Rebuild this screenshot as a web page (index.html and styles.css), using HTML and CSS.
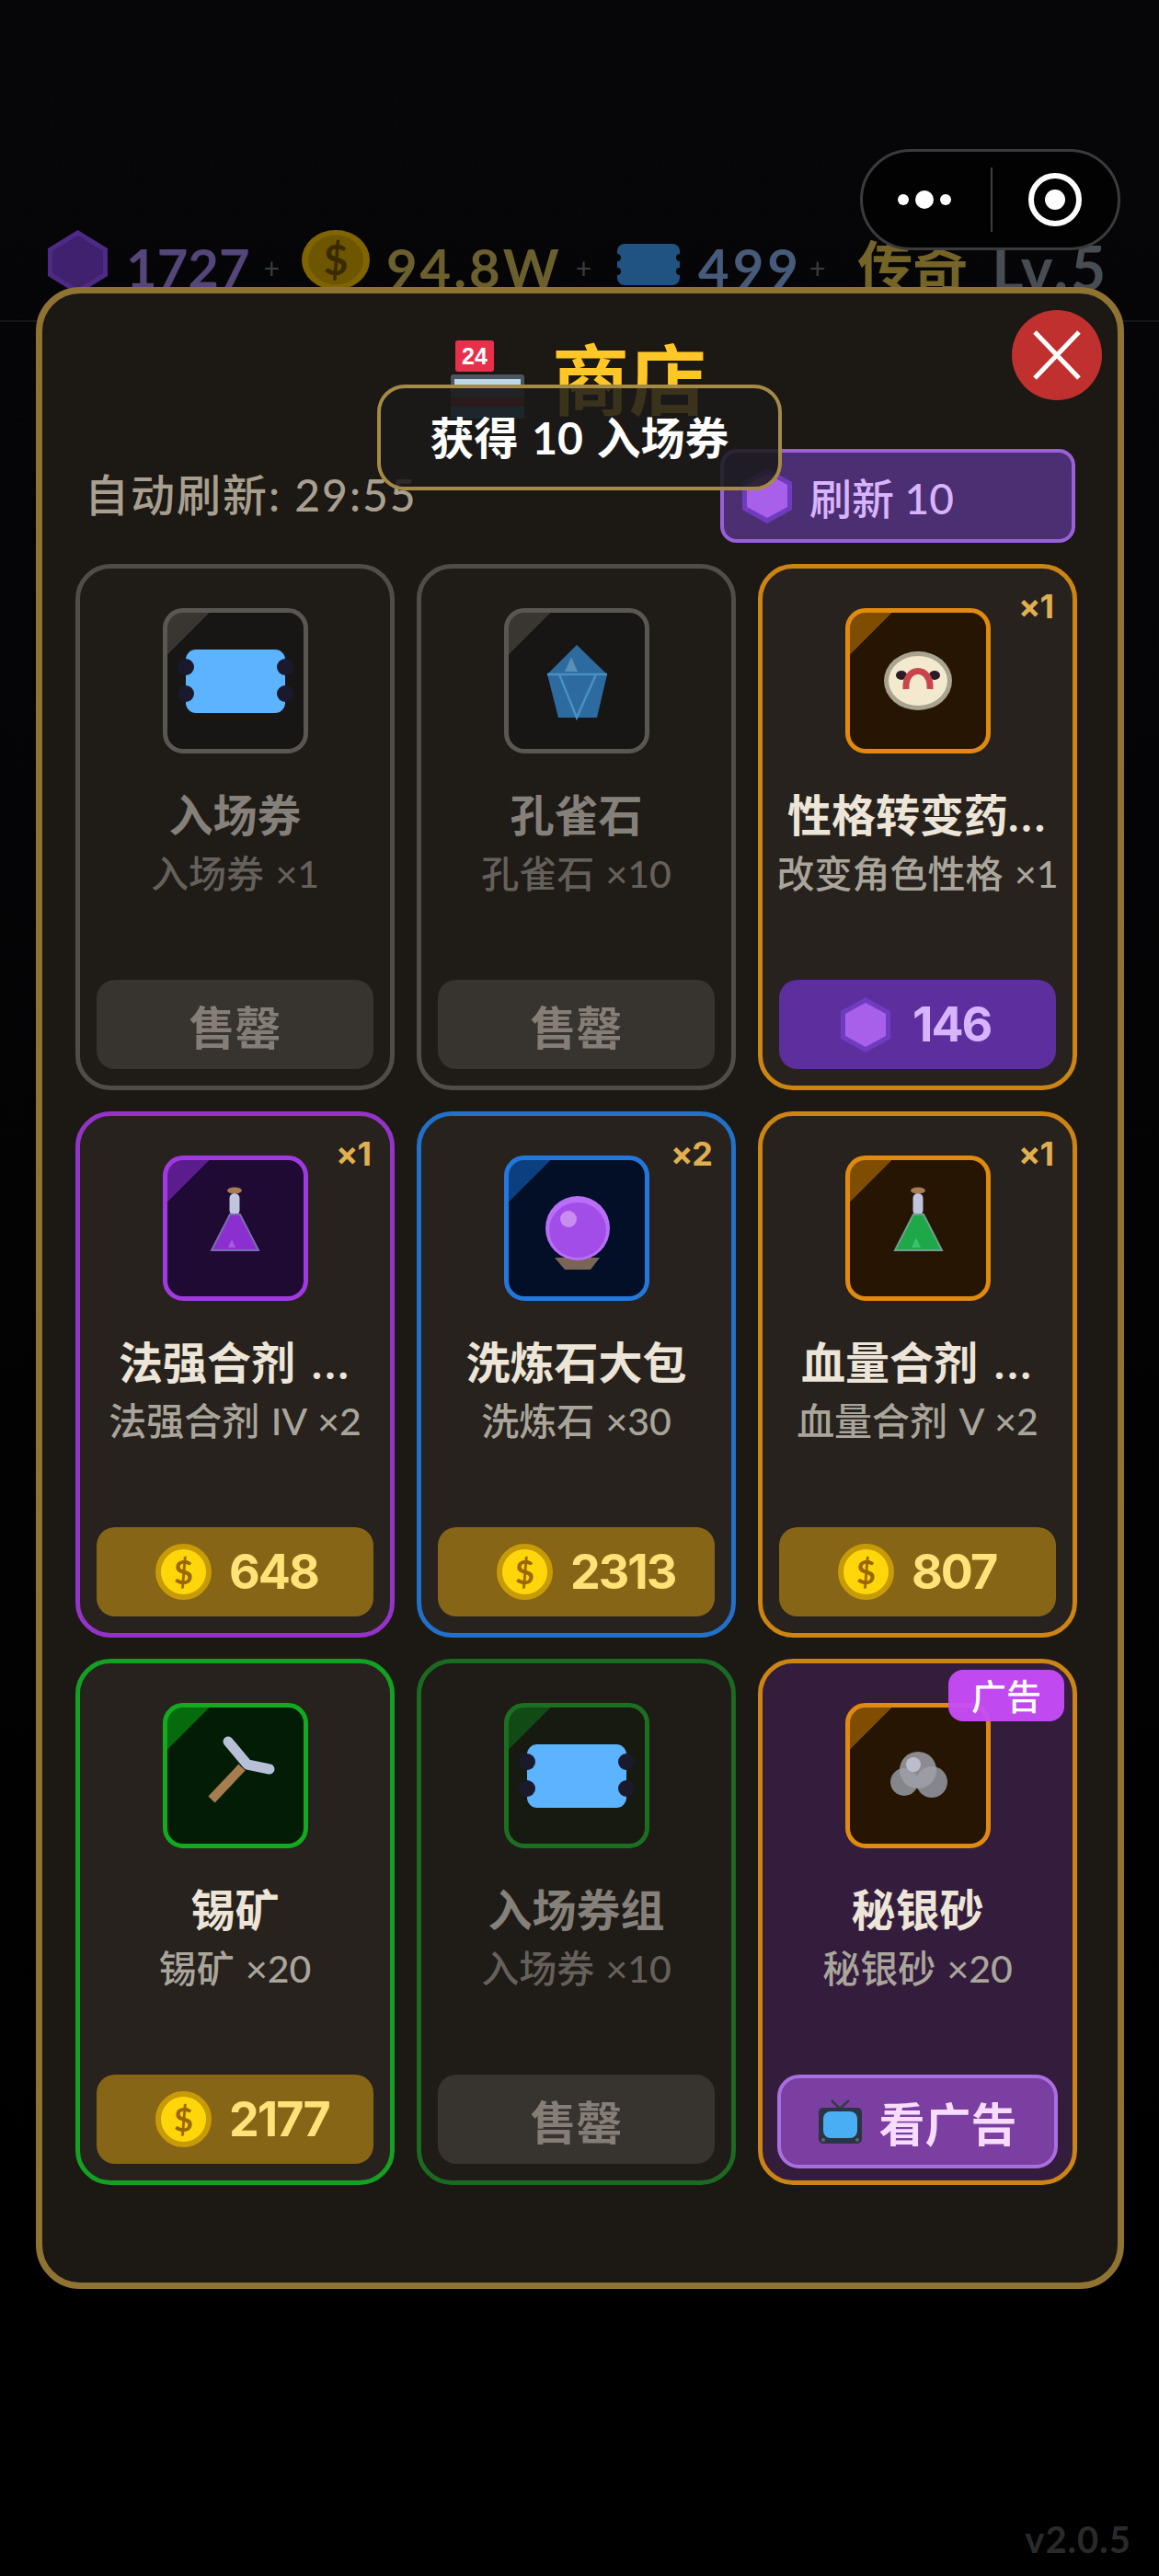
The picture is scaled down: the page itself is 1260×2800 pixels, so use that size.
FILE: index.html
```html
<!DOCTYPE html>
<html lang="zh-CN">
<head>
    <meta charset="UTF-8">
    <title>商店</title>
    <link rel="stylesheet" href="styles.css">
</head>
<body>
    <svg class="sprites" width="0" height="0">
        <symbol id="hex" viewBox="0 0 54 60">
            <polygon points="27,0 54,15 54,45 27,60 0,45 0,15" fill="#6f3cc0"/>
            <polygon points="27,6 49,18 49,42 27,54 5,42 5,18" fill="#a860ea"/>
        </symbol>
        <symbol id="ticket" viewBox="0 0 146 146">
            <rect x="19" y="39" width="108" height="69" rx="11" fill="#5cb3ff"/>
            <circle cx="19" cy="58" r="9" fill="#1b1a2d"/>
            <circle cx="19" cy="87" r="9" fill="#1b1a2d"/>
            <circle cx="127" cy="58" r="9" fill="#1b1a2d"/>
            <circle cx="127" cy="87" r="9" fill="#1b1a2d"/>
        </symbol>
    </svg>

    <div class="capsule">
        <span class="capsule-dots"><i></i><i></i><i></i></span>
        <span class="capsule-line"></span>
        <span class="capsule-target"></span>
    </div>

    <!-- 顶部资源栏 -->
    <div class="res-bar">
        <svg class="res-hex" viewBox="0 0 65 70"><polygon points="32.5,0 65,20 65,50 32.5,70 0,50 0,20" fill="#4d2a85"/><polygon points="32.5,6 60,23 60,47 32.5,64 5,47 5,23" fill="#3f2170"/></svg>
        <span class="res-num res-gem">1727</span>
        <span class="res-plus">+</span>
        <svg class="res-coin" viewBox="0 0 74 65"><ellipse cx="37" cy="32.5" rx="37" ry="32.5" fill="#806400"/><ellipse cx="37" cy="32.5" rx="30" ry="27" fill="#6e5500"/><text x="37" y="49" text-anchor="middle" font-size="46" font-weight="700" font-family="Lato, sans-serif" fill="#3a2a00">$</text></svg>
        <span class="res-num res-gold">94.8W</span>
        <span class="res-plus">+</span>
        <svg class="res-ticket" viewBox="0 0 68 45">
            <rect x="0" y="0" width="68" height="45" rx="8" fill="#205380"/>
            <circle cx="0" cy="15" r="4" fill="#050507"/>
            <circle cx="0" cy="30" r="4" fill="#050507"/>
            <circle cx="68" cy="15" r="4" fill="#050507"/>
            <circle cx="68" cy="30" r="4" fill="#050507"/>
        </svg>
        <span class="res-num res-blue">499</span>
        <span class="res-plus res-plus-near">+</span>
        <span class="res-rank">传奇</span>
        <span class="res-num res-level">Lv.5</span>
    </div>

    <!-- 商店面板 -->
    <div class="shop">
        <button class="close-btn">
            <svg viewBox="0 0 52 54" width="52" height="54"><path d="M2 2 L50 52 M50 2 L2 52" stroke="#fff" stroke-width="5" fill="none"/></svg>
        </button>
        <div class="shop-head">
            <svg class="shop-emoji" viewBox="0 0 82 85">
                <rect x="6" y="0" width="42" height="34" rx="3" fill="#e8304a"/>
                <text x="27" y="26" text-anchor="middle" font-size="25" font-weight="700" font-family="Liberation Sans, sans-serif" fill="#fff">24</text>
                <rect x="1" y="37" width="80" height="48" rx="3" fill="#4a5560"/>
                <rect x="5" y="42" width="72" height="9" fill="#bcd8e8"/>
                <rect x="1" y="62" width="80" height="10" fill="#8c2030"/>
                <rect x="1" y="72" width="80" height="13" fill="#2f6f96"/>
            </svg>
            <h1 class="shop-title">商店</h1>
        </div>

        <div class="shop-tools">
            <span class="timer">自动刷新: 29:55</span>
            <button class="refresh-btn">
                <svg class="refresh-hex"><use href="#hex"/></svg>
                <span>刷新 10</span>
            </button>
        </div>

        <div class="goods">
            <div class="card gray sold">
                <div class="item-icon"><svg viewBox="0 0 146 146"><use href="#ticket"/></svg></div>
                <div class="name">入场券</div>
                <div class="sub">入场券 ×1</div>
                <div class="buy buy-sold">售罄</div>
            </div>

            <div class="card gray sold">
                <div class="item-icon">
                    <svg viewBox="0 0 146 146">
                        <polygon points="73,34 106,66 95,113 53,113 41,66" fill="#2d6a9f"/>
                        <polygon points="67,47 74,63 60,63" fill="#5a8fb8"/>
                        <path d="M41 66 H106 M54 66 L73 113 L94 66" stroke="#4a90c0" stroke-width="2.5" fill="none"/>
                    </svg>
                </div>
                <div class="name">孔雀石</div>
                <div class="sub">孔雀石 ×10</div>
                <div class="buy buy-sold">售罄</div>
            </div>

            <div class="card orange">
                <span class="qty">×1</span>
                <div class="item-icon">
                    <svg viewBox="0 0 146 146">
                        <ellipse cx="73" cy="73" rx="37" ry="32" fill="#a9a48f"/>
                        <ellipse cx="73" cy="73" rx="32" ry="27" fill="#f2e9cf"/>
                        <ellipse cx="55" cy="67" rx="6" ry="5" fill="#2a1c24"/>
                        <ellipse cx="91" cy="67" rx="6" ry="5" fill="#2a1c24"/>
                        <path d="M60 82 C58 56 88 56 86 82" stroke="#c8454a" stroke-width="7" fill="none"/>
                    </svg>
                </div>
                <div class="name">性格转变药<span class="dots">...</span></div>
                <div class="sub">改变角色性格 ×1</div>
                <div class="buy buy-gem"><svg class="price-hex"><use href="#hex"/></svg><span>146</span></div>
            </div>

            <div class="card purple">
                <span class="qty">×1</span>
                <div class="item-icon">
                    <svg viewBox="0 0 146 146">
                        <ellipse cx="72" cy="32" rx="8" ry="3.5" fill="#a77c50"/>
                        <rect x="66.5" y="35" width="11" height="24" rx="5.5" fill="#c0c4dc"/>
                        <polygon points="67,58 78,58 98,97 47,97" fill="#8b2fd0" stroke="#7b6db0" stroke-width="2"/>
                        <polygon points="69,85 73,94 65,94" fill="#a85cdc"/>
                    </svg>
                </div>
                <div class="name">法强合剂 <span class="dots">...</span></div>
                <div class="sub">法强合剂 IV ×2</div>
                <div class="buy buy-gold"><span class="coin">$</span><span>648</span></div>
            </div>

            <div class="card blue">
                <span class="qty">×2</span>
                <div class="item-icon">
                    <svg viewBox="0 0 146 146">
                        <polygon points="49,105 98,105 88,118 60,118" fill="#7a6456"/>
                        <circle cx="74" cy="73" r="35" fill="#b96ef8"/>
                        <ellipse cx="74" cy="75" rx="31" ry="30" fill="#a34de8"/>
                        <circle cx="64" cy="63" r="9" fill="#c98df0"/>
                    </svg>
                </div>
                <div class="name">洗炼石大包</div>
                <div class="sub">洗炼石 ×30</div>
                <div class="buy buy-gold"><span class="coin">$</span><span>2313</span></div>
            </div>

            <div class="card orange">
                <span class="qty">×1</span>
                <div class="item-icon">
                    <svg viewBox="0 0 146 146">
                        <ellipse cx="73" cy="32" rx="8" ry="3.5" fill="#a77c50"/>
                        <rect x="67.5" y="35" width="11" height="24" rx="5.5" fill="#c0c4dc"/>
                        <polygon points="68,58 79,58 99,97 48,97" fill="#1fa84a" stroke="#6f9f8f" stroke-width="2"/>
                        <polygon points="71,83 76,94 66,94" fill="#3cc06a"/>
                    </svg>
                </div>
                <div class="name">血量合剂 <span class="dots">...</span></div>
                <div class="sub">血量合剂 V ×2</div>
                <div class="buy buy-gold"><span class="coin">$</span><span>807</span></div>
            </div>

            <div class="card green">
                <div class="item-icon">
                    <svg viewBox="0 0 146 146">
                        <path d="M47 99 L80 64" stroke="#a57d4f" stroke-width="10" fill="none"/>
                        <path d="M65 36 L86 61 L110 66" stroke="#b8c0d8" stroke-width="11" stroke-linecap="round" stroke-linejoin="round" fill="none"/>
                    </svg>
                </div>
                <div class="name">锡矿</div>
                <div class="sub">锡矿 ×20</div>
                <div class="buy buy-gold"><span class="coin">$</span><span>2177</span></div>
            </div>

            <div class="card green-dim sold">
                <div class="item-icon"><svg viewBox="0 0 146 146"><use href="#ticket"/></svg></div>
                <div class="name">入场券组</div>
                <div class="sub">入场券 ×10</div>
                <div class="buy buy-sold">售罄</div>
            </div>

            <div class="card orange ad">
                <span class="ad-tag">广告</span>
                <div class="item-icon">
                    <svg viewBox="0 0 146 146">
                        <circle cx="58" cy="80" r="15" fill="#85858c"/>
                        <circle cx="88" cy="80" r="17" fill="#85858c"/>
                        <circle cx="73" cy="67" r="20" fill="#a0a0a8" fill-opacity="0.85"/>
                        <circle cx="68" cy="61" r="8" fill="#bcbccc"/>
                    </svg>
                </div>
                <div class="name">秘银砂</div>
                <div class="sub">秘银砂 ×20</div>
                <div class="buy buy-ad">
                    <svg class="tv" viewBox="0 0 47 48">
                        <path d="M14 1 L23 10 L33 1" stroke="#333a46" stroke-width="2.5" fill="none"/>
                        <rect x="0" y="9" width="47" height="39" rx="5" fill="#2b3442"/>
                        <rect x="5" y="13" width="37" height="29" rx="8" fill="#4aaef5"/>
                        <circle cx="5" cy="44" r="2" fill="#5d6673"/>
                        <circle cx="42" cy="44" r="2" fill="#5d6673"/>
                    </svg>
                    <span>看广告</span>
                </div>
            </div>
        </div>

        <!-- 提示 -->
        <div class="toast">获得 10 入场券</div>
    </div>

    <div class="version">v2.0.5</div>
</body>
</html>
```

FILE: styles.css
```css
* {
    box-sizing: border-box;
    margin: 0;
    padding: 0;
}

body {
    width: 1260px;
    height: 2800px;
    overflow: hidden;
    background: linear-gradient(#060608 0, #050507 600px, #000 2400px);
    color: #ece5d8;
    font-family: Lato, "Noto Sans CJK SC", sans-serif;
    position: relative;
}

.sprites {
    position: absolute;
}

/* 胶囊按钮 */
.capsule {
    position: absolute;
    left: 935px;
    top: 162px;
    width: 283px;
    height: 110px;
    border: 3px solid #3b3b3d;
    border-radius: 55px;
    background: #020203;
    display: flex;
    align-items: center;
    z-index: 1;
}

.capsule-dots {
    width: 139px;
    padding-right: 6px;
    display: flex;
    align-items: center;
    justify-content: center;
    gap: 7px;
}

.capsule-dots i {
    width: 12px;
    height: 12px;
    border-radius: 50%;
    background: #fff;
}

.capsule-dots i:nth-child(2) {
    width: 20px;
    height: 20px;
}

.capsule-line {
    width: 2px;
    height: 70px;
    background: #3e3e40;
}

.capsule-target {
    width: 58px;
    height: 58px;
    margin-left: 39px;
    border-radius: 50%;
    border: 6px solid #fff;
    position: relative;
}

.capsule-target::after {
    content: "";
    position: absolute;
    left: 12px;
    top: 12px;
    width: 22px;
    height: 22px;
    border-radius: 50%;
    background: #fff;
}

/* 资源栏 */
.res-bar {
    height: 350px;
    padding: 250px 0 0 52px;
    margin-bottom: -38px;
    border-bottom: 2px solid #151517;
    display: flex;
    align-items: flex-start;
    white-space: nowrap;
}

.res-hex {
    width: 65px;
    height: 70px;
    flex: none;
}

.res-coin {
    width: 74px;
    height: 65px;
    flex: none;
    margin-left: 24px;
}

.res-ticket {
    width: 68px;
    height: 45px;
    flex: none;
    margin: 15px 0 0 28px;
}

.res-num {
    font-size: 58px;
    line-height: 72px;
    font-weight: 700;
    margin: 5px 0 0 20px;
}

.res-gem { color: #54457a; }
.res-gold { color: #6b5f2e; margin-left: 18px; letter-spacing: 3px; }
.res-blue { color: #465b7a; letter-spacing: 4px; }
.res-level { color: #484d53; margin-left: 26px; font-size: 66px; letter-spacing: 3px; }

.res-plus {
    font-size: 30px;
    line-height: 72px;
    color: #3c3c3c;
    margin: 5px 0 0 15px;
}

.res-plus-near {
    margin-left: 8px;
}

.res-rank {
    font-size: 60px;
    line-height: 72px;
    font-weight: 700;
    color: #756428;
    margin: 3px 0 0 35px;
}

/* 面板 */
.shop {
    position: relative;
    margin-left: 39px;
    width: 1183px;
    height: 2176px;
    padding: 0 44px 0 36px;
    border: 7px solid #8f7333;
    border-radius: 48px;
    background: #1c1814;
}

.close-btn {
    position: absolute;
    right: 17px;
    top: 18px;
    width: 98px;
    height: 98px;
    border: none;
    border-radius: 50%;
    background: #c0302f;
    display: flex;
    align-items: center;
    justify-content: center;
}

.shop-head {
    height: 169px;
    padding: 30px 0 0 4px;
    display: flex;
    align-items: flex-start;
    justify-content: center;
    gap: 29px;
}

.shop-emoji {
    width: 82px;
    height: 85px;
    margin-top: 21px;
}

.shop-title {
    font-size: 84px;
    line-height: 128px;
    font-weight: 700;
    color: #ffc627;
}

.shop-tools {
    height: 102px;
    margin-bottom: 23px;
    display: flex;
    align-items: center;
    justify-content: space-between;
}

.timer {
    margin: -8px 0 0 10px;
    font-size: 48px;
    font-weight: 500;
    letter-spacing: 2px;
    color: #a89f8f;
}

.refresh-btn {
    width: 386px;
    height: 102px;
    margin-right: 2px;
    padding-left: 20px;
    border: 4px solid #9a60d8;
    border-radius: 18px;
    background: #4c2f72;
    color: #d8b4fe;
    font-family: inherit;
    font-size: 46px;
    font-weight: 500;
    display: flex;
    align-items: center;
    gap: 19px;
}

.refresh-hex {
    width: 54px;
    height: 60px;
}

/* 商品格 */
.goods {
    display: grid;
    grid-template-columns: repeat(3, 1fr);
    grid-auto-rows: 572px;
    gap: 23px 24px;
}

.card {
    position: relative;
    padding: 43px 18px 18px;
    border: 5px solid var(--line);
    border-radius: 38px;
    background: #27221d;
    display: flex;
    flex-direction: column;
    align-items: center;
    min-width: 0;
}

.gray {
    --line: #504d49;
    --icon-line: #5a5753;
    --icon-bg: #181614;
    --icon-corner: #393632;
}

.orange {
    --line: #cc8414;
    --icon-line: #e08a0e;
    --icon-bg: #271503;
    --icon-corner: #7f4d00;
}

.purple {
    --line: #9333c8;
    --icon-line: #a03ae0;
    --icon-bg: #1e0a33;
    --icon-corner: #5b1d8e;
}

.blue {
    --line: #2270c8;
    --icon-line: #2478db;
    --icon-bg: #020f26;
    --icon-corner: #0b3f80;
}

.green {
    --line: #14a022;
    --icon-line: #12aa1e;
    --icon-bg: #031c05;
    --icon-corner: #056b0d;
}

.green-dim {
    --line: #1a6a22;
    --icon-line: #1b6f20;
    --icon-bg: #161a10;
    --icon-corner: #114a15;
}

.card.sold {
    background: #1f1b17;
}

.card.ad {
    background: #331c3c;
}

.item-icon {
    width: 158px;
    height: 158px;
    flex: none;
    padding: 1px;
    border: 5px solid var(--icon-line);
    border-radius: 22px;
    background: linear-gradient(135deg, var(--icon-corner) 32px, var(--icon-bg) 32px);
}

.item-icon svg {
    display: block;
    width: 146px;
    height: 146px;
}

.name {
    margin-top: 37px;
    font-size: 48px;
    line-height: 60px;
    font-weight: 700;
    white-space: nowrap;
    word-spacing: 6px;
}

.dots {
    letter-spacing: 3px;
}

.sub {
    margin-top: 9px;
    font-size: 41px;
    line-height: 50px;
    font-weight: 500;
    color: #a9a59b;
    white-space: nowrap;
    word-spacing: 2px;
}

.sold .name {
    color: #85807a;
}

.sold .sub {
    color: #65605a;
}

.qty {
    position: absolute;
    right: 21px;
    top: 19px;
    font-family: Inter, sans-serif;
    font-size: 36px;
    line-height: 44px;
    font-weight: 700;
    letter-spacing: -1px;
    color: #e0b050;
}

.ad-tag {
    position: absolute;
    right: 9px;
    top: 7px;
    width: 126px;
    height: 56px;
    border-radius: 16px;
    background: rgba(200, 77, 250, 0.95);
    color: #fff;
    font-size: 38px;
    font-weight: 500;
    line-height: 56px;
    text-align: center;
    z-index: 1;
}

.buy {
    width: 301px;
    height: 97px;
    flex: none;
    margin-top: auto;
    border-radius: 20px;
    font-family: Inter, sans-serif;
    font-size: 52px;
    font-weight: 700;
    letter-spacing: -2px;
    display: flex;
    align-items: center;
    gap: 19px;
}

.buy-sold {
    justify-content: center;
    background: #37332e;
    color: #857e77;
    font-family: "Noto Sans CJK SC", sans-serif;
    font-size: 50px;
    letter-spacing: 0;
}

.buy-gold {
    padding-left: 64px;
    background: #866516;
    color: #ffe278;
}

.buy-gem {
    padding-left: 67px;
    gap: 24px;
    background: #5c2e9e;
    color: #d8b4fe;
}

.buy-ad {
    justify-content: center;
    width: 305px;
    height: 102px;
    margin-bottom: -5px;
    border: 4px solid #a96fe0;
    border-radius: 24px;
    background: #7a3fa0;
    color: #f8dcff;
    font-family: "Noto Sans CJK SC", sans-serif;
    font-size: 50px;
    letter-spacing: 0;
}

.coin {
    width: 61px;
    height: 61px;
    flex: none;
    border: 6px solid #c79a08;
    border-radius: 50%;
    background: #ffd60a;
    color: #9a6700;
    font-family: Lato, sans-serif;
    font-size: 36px;
    letter-spacing: 0;
    line-height: 49px;
    text-align: center;
}

.price-hex {
    width: 54px;
    height: 60px;
}

.tv {
    width: 47px;
    height: 48px;
}

/* 提示 */
.toast {
    position: absolute;
    left: 364px;
    top: 99px;
    width: 440px;
    height: 115px;
    border: 4px solid #a58a45;
    border-radius: 30px;
    background: rgba(26, 26, 26, 0.86);
    color: #fff;
    font-size: 48px;
    font-weight: 700;
    line-height: 107px;
    text-align: center;
    word-spacing: 3px;
}

.version {
    margin-top: 248px;
    padding-right: 30px;
    text-align: right;
    font-size: 40px;
    font-weight: 700;
    letter-spacing: 1px;
    line-height: 48px;
    color: #2a2a2a;
}
```
